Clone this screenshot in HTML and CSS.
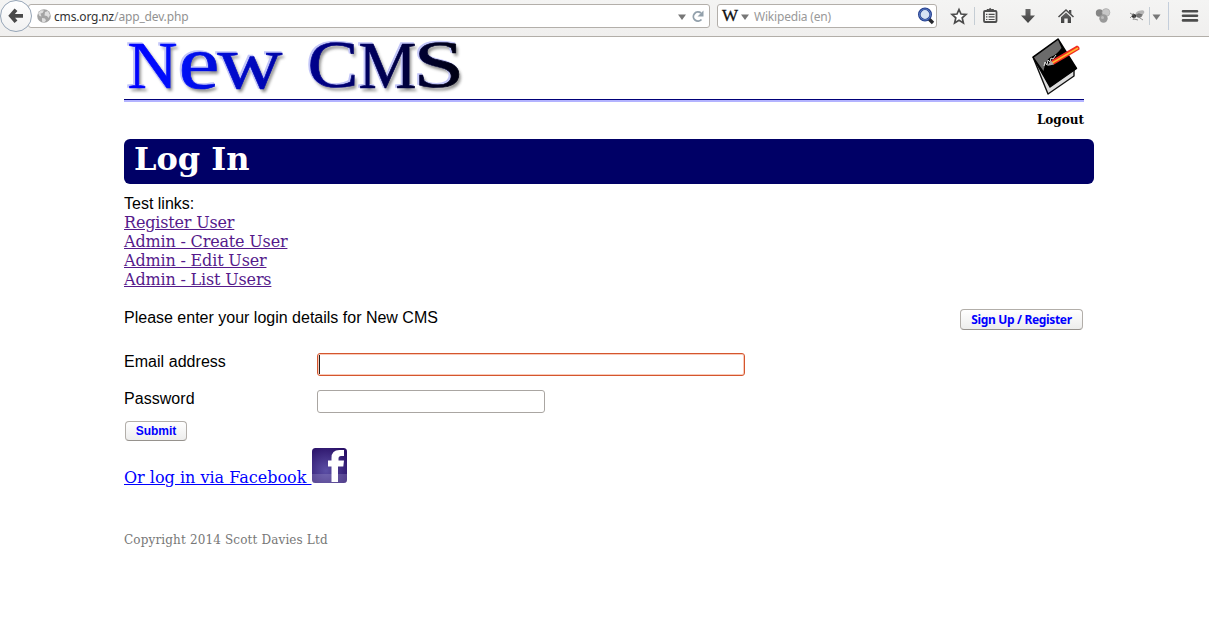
FILE: index.html
```html
<!DOCTYPE html>
<html lang="en">
<head>
<meta charset="utf-8">
<title>New CMS</title>
<link rel="stylesheet" href="styles.css">
</head>
<body>
<div class="toolbar">
  <div class="back"><svg width="32" height="32" viewBox="0 0 32 32"><path d="M16 9.800 10.800 15.800l5.200 6M11 15.800h12" fill="none" stroke="#4a4a4a" stroke-width="3.800"/></svg></div>
  <div class="urlbar">
    <svg class="globe" width="14" height="14" viewBox="0 0 14 14"><circle cx="7" cy="7" r="6.800" fill="#a3a3a3"/><path d="M1 4 4 1.200 7 1.500 5.500 4 3.500 4.500 4.500 7.500 2.500 7zM8 3l3-1 2 4-1.500 3-1.500-2-2.500-.5zM5 9l3 .5 1 2-2 2-2-1z" fill="#dedede"/></svg>
    <span class="url">cms.org.nz<span class="path">/app_dev.php</span></span>
    <svg class="drop" width="8" height="6" viewBox="0 0 8 6"><path d="M0 .5h8L4 6z" fill="#777"/></svg>
    <svg class="reload" width="14" height="14" viewBox="0 0 14 14"><path d="M10.500 10.500A4.600 4.600 0 1 1 10 4" fill="none" stroke="#93a1ac" stroke-width="1.900"/><path d="M12.500 1.500v6h-6z" fill="#93a1ac"/></svg>
  </div>
  <div class="search">
    <span class="wiki">W</span>
    <svg class="wdrop" width="8" height="6" viewBox="0 0 8 6"><path d="M0 .5h8L4 6z" fill="#777"/></svg>
    <span class="hint">Wikipedia (en)</span>
    <svg class="lens" width="18" height="18" viewBox="0 0 18 18"><path d="m12 12 4 4" stroke="#26282d" stroke-width="3.400"/><circle cx="8" cy="7.500" r="5.700" fill="#d6e2f4" stroke="#26418f" stroke-width="2.600"/><circle cx="8" cy="7.500" r="5.500" fill="none" stroke="#6487ce" stroke-width=".8"/></svg>
  </div>
  <svg class="tools" width="272" height="32" viewBox="937 0 272 32">
    <defs><linearGradient id="ink" x1="0" y1="0" x2="0" y2="1"><stop offset="0" stop-color="#686868"/><stop offset="1" stop-color="#414141"/></linearGradient></defs>
    <path d="m959 9.500 2 4.500 5 .5-3.800 3.400 1.200 5.100-4.400-2.700-4.400 2.700 1.200-5.100-3.800-3.400 5-.5z" fill="#fff" stroke="#4b4b4b" stroke-width="1.700"/>
    <path d="M974.500 7v18M1149.500 7v18" stroke="#c5cdd4"/>
    <path d="M1168.500 2v28" stroke="#c4cedb"/>
    <rect x="984" y="11" width="12.500" height="11" rx="1" fill="none" stroke="#4e4e4e" stroke-width="1.800"/>
    <path d="M987 11V9.500h1.800q1.400-2 2.800 0h1.900V11z" fill="#4e4e4e" stroke="#4e4e4e"/>
    <path d="M986 14.300h1.400m1.200 0h6M986 16.900h1.400m1.200 0h6M986 19.500h1.400m1.200 0h6" stroke="#4e4e4e" stroke-width="1.200"/>
    <path d="M1025.500 9h5v6.500h4.500l-7 7.500-7-7.500h4.500z" fill="url(#ink)"/>
    <path d="m1058.500 17 7.500-7 7.500 7" fill="none" stroke="#4c4c4c" stroke-width="1.500"/>
    <path d="M1069 10h2.300v4.300l-2.300-2z" fill="#4c4c4c"/><path d="m1066 12.500 5 4.800V23h-3.300v-4.500h-3.400V23h-3.300v-5.700z" fill="url(#ink)"/>
    <circle cx="1099.500" cy="13" r="3.700" fill="#858585"/><circle cx="1106" cy="12.500" r="3.900" fill="#c7c7c7" stroke="#aaa" stroke-width=".7"/><circle cx="1103.500" cy="18.500" r="4.200" fill="#999"/><circle cx="1102.500" cy="17.500" r="1.500" fill="#bbb"/>
    <ellipse cx="1140" cy="13" rx="4.500" ry="2.300" transform="rotate(-20 1140 13)" fill="#b5b5b5"/>
    <ellipse cx="1134" cy="16" rx="2.300" ry="2" fill="#333"/><ellipse cx="1139" cy="15.500" rx="3" ry="2" fill="#777"/>
    <path d="m1130 13 3 2-3 3m5-2-2 4m4-4 6 4m-5-6 5 1m-10-2 1 3m0 3 4 1" fill="none" stroke="#666" stroke-width=".7"/>
    <path d="M1152.500 14.500h8l-4 5.500z" fill="#777"/>
    <path d="M1183 11.200h14M1183 15.800h14M1183 20.400h14" stroke="#4c4c4c" stroke-width="2.600" stroke-linecap="round"/>
  </svg>
</div>

<div class="page">
  <header class="masthead">
    <svg class="logo" width="350" height="62" viewBox="124 37 350 62">
      <defs>
        <linearGradient id="blue" gradientUnits="userSpaceOnUse" x1="127" y1="0" x2="460" y2="0"><stop offset="0" stop-color="#0000ff"/><stop offset=".15" stop-color="#0010fa"/><stop offset=".6" stop-color="#000080"/><stop offset="1" stop-color="#000010"/></linearGradient>
        <filter id="soft" x="-10%" y="-20%" width="120%" height="150%"><feGaussianBlur stdDeviation="1.400"/></filter>
        <g id="word">
          <text x="127" y="87.500" font-size="68" textLength="50" lengthAdjust="spacingAndGlyphs">N</text>
          <text x="178" y="87.500" font-size="76" textLength="41" lengthAdjust="spacingAndGlyphs">e</text>
          <text x="217" y="87.500" font-size="76" textLength="65" lengthAdjust="spacingAndGlyphs">w</text>
          <text x="307" y="87" font-size="68" textLength="51" lengthAdjust="spacingAndGlyphs">C</text>
          <text x="358" y="87.500" font-size="68" textLength="58" lengthAdjust="spacingAndGlyphs">M</text>
          <text x="413" y="87" font-size="68" textLength="51" lengthAdjust="spacingAndGlyphs">S</text>
        </g>
      </defs>
      <use href="#word" x="2.500" y="3" fill="#555" opacity=".65" filter="url(#soft)"/>
      <use href="#word" x="-1" y="-1" fill="#c3c6f8" stroke="#c3c6f8" stroke-width="1.500"/>
      <use href="#word" x=".5" y="0" fill="url(#blue)" stroke="url(#blue)" stroke-width=".6"/>
    </svg>
    <svg class="book" width="52" height="60" viewBox="1030 36 52 60">
      <path d="m1033 57 15 37 26-18v-8" fill="#ddd" stroke="#111" stroke-width="1.400" stroke-linejoin="round"/>
      <path d="m1033 57 25-18 18.500 29.500-26.500 18.500z" fill="#000" stroke="#000" stroke-width="1.500" stroke-linejoin="round"/>
      <path d="m1034 57.500 24-17.500 3.500 8q-5 7-11 9-5 3-7 14z" fill="#6b6b6b"/>
      <path d="m1044 66 1-4 2 3 1-5 2 2 1-4 2 1 3-4" fill="none" stroke="#ddd" stroke-width="1"/>
      <path d="m1049 64 3-4 25-14.500q3 1 2.500 4l-25.500 15z" fill="#f32b20"/><path d="m1052 63 26-15" stroke="#ffb92e" stroke-width="1.700"/>
      <path d="m1047 66 4-5.500 3 4z" fill="#aaa"/>
    </svg>
  </header>
  <div class="account"><a class="logout">Logout</a></div>
  <h1 class="title">Log In</h1>
  <div class="links">
    <span class="sans">Test links:</span>
    <a>Register User</a>
    <a>Admin - Create User</a>
    <a>Admin - Edit User</a>
    <a>Admin - List Users</a>
  </div>
  <div class="intro">
    <span class="sans">Please enter your login details for New CMS</span>
    <button class="btn signup"><span>Sign Up / Register</span></button>
  </div>
  <div class="row"><label>Email address</label><div class="field email"><i class="caret"></i></div></div>
  <div class="row"><label>Password</label><div class="field password"></div></div>
  <button class="btn submit">Submit</button>
  <div class="social">
    <a>Or log in via Facebook&nbsp;</a><svg class="fb" width="35" height="35" viewBox="0 0 35 35">
      <defs><radialGradient id="violet" cx=".4" cy=".65" r=".75"><stop offset="0" stop-color="#5c50a6"/><stop offset="1" stop-color="#2a1168"/></radialGradient></defs>
      <rect width="35" height="35" rx="3.500" fill="url(#violet)"/><path d="M0 26h35v5.500a3.500 3.500 0 0 1-3.500 3.500h-28A3.500 3.500 0 0 1 0 31.500z" fill="#a49ace" opacity=".3"/>
      <path d="M19.500 34V18.500h-3.500v-6h3.500V10q0-8 8-8h4.500v6h-3q-2.500 0-2.500 2.500v2h5.500l-.7 6H26V34z" fill="#fff"/>
    </svg>
  </div>
  <footer class="copyright">Copyright 2014 Scott Davies Ltd</footer>
</div>
</body>
</html>
```
FILE: styles.css
```css
* { box-sizing: border-box; }
body { margin: 0; background: #fff; color: #000; font: 16px/19px "DejaVu Serif", serif; }
svg { display: block; flex: none; }
.toolbar { display: flex; height: 37px; background: linear-gradient(#f4f4f3, #f0efee); border-bottom: 1px solid #b2aea8; }
.back { z-index: 1; flex: none; width: 32px; height: 32px; border: 1px solid #96a5b7; border-radius: 50%; background: linear-gradient(#fff, #f1f1f1); }
.back svg { margin: -1px; }
.urlbar, .search { display: flex; align-items: center; height: 24px; margin-top: 4px; border: 1px solid #b3afaa; border-radius: 3px; background: #fff; font: 12px/22px "Noto Sans", sans-serif; }
.urlbar { width: 682px; margin-left: -4px; padding: 0 4px 0 8px; }
.url { flex: 1; margin-left: 3px; padding-top: 1px; color: #333; letter-spacing: -.16px; }
.path { color: #929292; }
.drop, .wdrop { margin-top: 2px; }
.reload { margin-left: 5px; }
.search { width: 220px; margin-left: 7px; padding: 0 1px 0 4px; }
.wiki { width: 18px; font: 17px/20px "Liberation Serif", serif; color: #111; -webkit-text-stroke: .3px #111; }
.wdrop { margin-left: 1px; }
.hint { flex: 1; margin-left: 5px; padding-top: 1px; color: #999; letter-spacing: -.2px; }
.page { width: 960px; margin-left: 124px; }
.masthead { display: flex; justify-content: space-between; height: 65px; border-bottom: 2px solid #b3b3ff; box-shadow: inset 0 -1px #000078; }
.logo { font-family: "Liberation Serif", serif; }
.book { margin: -1px 2px 0 0; }
.account { height: 37px; padding-top: 9px; text-align: right; font-size: 12px; font-weight: bold; }
.title { width: 970px; height: 45px; margin: 0; padding: 1px 10px; border-radius: 6px; background: #006; color: #fff; font-size: 32px; line-height: 38px; }
.links { display: flex; flex-direction: column; align-items: flex-start; padding-top: 10px; }
.links a { color: #551a8b; text-decoration: underline; letter-spacing: -.17px; }
.sans, label { font-family: "Liberation Sans", sans-serif; }
.intro { display: flex; justify-content: space-between; height: 45px; margin-top: 19px; }
.btn { display: block; padding: 0; border: 1px solid #b2aea9; border-bottom-color: #96928d; border-radius: 4px; background: linear-gradient(#fff, #ededec); color: #00f; font: bold 12px/18px "Liberation Sans", sans-serif; }
.signup { width: 123px; height: 21px; margin: 1px 1px 0 0; font-family: "Noto Sans", sans-serif; letter-spacing: -.34px; }
.row { display: flex; height: 37px; }
label { width: 193px; line-height: 17px; letter-spacing: .04px; }
.field { height: 23px; border: 1px solid #aaa6a2; border-radius: 3px; background: #fff; }
.email { width: 428px; padding: 1px; border-color: #d4562e; box-shadow: inset 0 0 0 1px #f9cab9; }
.caret { display: block; width: 1px; height: 19px; background: #222; }
.password { width: 228px; }
.submit { width: 62px; height: 20px; margin: -6px 0 0 1px; }
.social { display: flex; height: 39px; margin-top: 7px; }
.social a { margin-top: 20px; color: #00f; text-decoration: underline; }
.copyright { margin-top: 44px; color: #777; font-size: 12px; letter-spacing: .14px; }
```
